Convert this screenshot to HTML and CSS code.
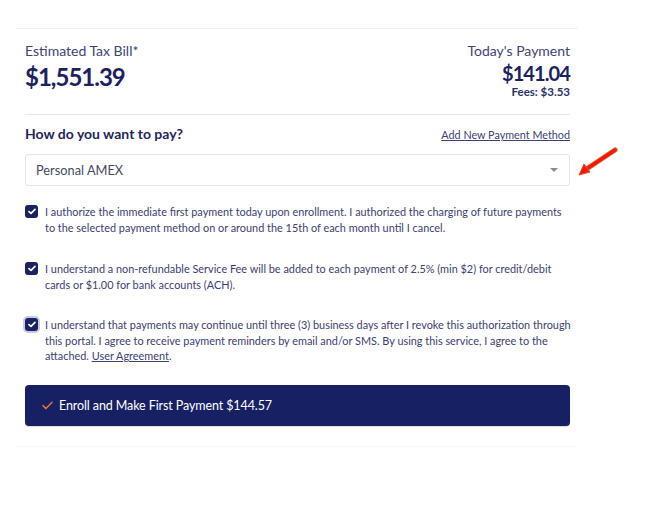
FILE: index.html
```html
<!DOCTYPE html>
<html>
<head>
<meta charset="utf-8">
<link rel="stylesheet" href="styles.css">
</head>
<body>
<div class="panel">
  <div class="summary">
    <div class="col">
      <div class="label">Estimated Tax Bill*</div>
      <div class="amount-big">$1,551.39</div>
    </div>
    <div class="col right">
      <div class="label">Today's Payment</div>
      <div class="amount">$141.04</div>
      <div class="fees">Fees: $3.53</div>
    </div>
  </div>
  <div class="pay-head">
    <div class="question">How do you want to pay?</div>
    <a class="add-link" href="#">Add New Payment Method</a>
  </div>
  <div class="select-wrap">
    <div class="select">
      <span>Personal AMEX</span>
      <span class="caret"></span>
    </div>
    <svg class="arrow" width="44" height="34" viewBox="0 0 44 34">
      <line x1="40" y1="4" x2="10" y2="24" stroke="#e8501c" stroke-width="5" stroke-linecap="round"/>
      <line x1="40" y1="4" x2="10" y2="24" stroke="#f2180c" stroke-width="3" stroke-linecap="round"/>
      <polygon points="4,29 9,18 15,26" fill="#f2180c" stroke="#e8501c" stroke-width="1"/>
    </svg>
  </div>
  <div class="checks">
    <div class="check-row r1">
      <span class="box"><svg width="8" height="7" viewBox="0 0 8 7"><path d="M1 3.6 L3 5.4 L7 1.4" fill="none" stroke="#fff" stroke-width="1.6" stroke-linecap="round" stroke-linejoin="round"/></svg></span>
      <p>I authorize the immediate first payment today upon enrollment. I authorized the charging of future payments to the selected payment method on or around the 15th of each month until I cancel.</p>
    </div>
    <div class="check-row r2">
      <span class="box"><svg width="8" height="7" viewBox="0 0 8 7"><path d="M1 3.6 L3 5.4 L7 1.4" fill="none" stroke="#fff" stroke-width="1.6" stroke-linecap="round" stroke-linejoin="round"/></svg></span>
      <p>I understand a non-refundable Service Fee will be added to each payment of 2.5% (min $2) for credit/debit cards or $1.00 for bank accounts (ACH).</p>
    </div>
    <div class="check-row r3">
      <span class="box focus"><svg width="8" height="7" viewBox="0 0 8 7"><path d="M1 3.6 L3 5.4 L7 1.4" fill="none" stroke="#fff" stroke-width="1.6" stroke-linecap="round" stroke-linejoin="round"/></svg></span>
      <p>I understand that payments may continue until three (3) business days after I revoke this authorization through this portal. I agree to receive payment reminders by email and/or SMS. By using this service, I agree to the attached. <a href="#" class="ua">User Agreement</a>.</p>
    </div>
  </div>
  <button class="enroll">
    <svg width="11" height="9" viewBox="0 0 11 9"><path d="M1 4.6 L4 7.6 L10 1.2" fill="none" stroke="#e0703c" stroke-width="1.5" stroke-linecap="round" stroke-linejoin="round"/></svg>
    <span>Enroll and Make First Payment $144.57</span>
  </button>
  <div class="bottom-line"></div>
</div>
</body>
</html>
```
FILE: styles.css
```css
* { box-sizing: border-box; }
body {
  margin: 0;
  background: #fff;
  font-family: Lato, "Noto Sans", sans-serif;
  color: #3b4170;
}
.panel {
  margin: 28px 0 0 16px;
  width: 562px;
  border-top: 1px solid #f0f0f2;
  padding: 0 8px 0 9px;
}
.summary {
  display: flex;
  justify-content: space-between;
  padding-top: 12px;
  padding-bottom: 15px;
  border-bottom: 1px solid #e6e7ea;
}
.col { display: flex; flex-direction: column; }
.right { align-items: flex-end; }
.label {
  font-size: 14px;
  line-height: 20px;
  color: #3e4472;
}
.amount-big {
  font-size: 24px;
  font-weight: 700;
  letter-spacing: -1px;
  line-height: 30px;
  color: #1b2261;
  margin-top: 1px;
}
.amount {
  font-size: 20px;
  font-weight: 700;
  letter-spacing: -0.9px;
  line-height: 24px;
  color: #1b2261;
  margin-top: 0;
}
.fees {
  font-size: 11.5px;
  font-weight: 700;
  line-height: 14px;
  color: #2b3166;
  margin-top: 0;
}
.pay-head {
  display: flex;
  justify-content: space-between;
  align-items: baseline;
  margin-top: 10px;
}
.question {
  font-size: 14px;
  font-weight: 700;
  color: #1f2560;
  line-height: 18px;
}
.add-link {
  font-size: 10.8px;
  color: #3b4170;
  text-decoration: underline;
}
.select-wrap {
  position: relative;
  margin-top: 11px;
}
.select {
  height: 32px;
  border: 1px solid #e4e5e8;
  border-radius: 3px;
  display: flex;
  align-items: center;
  justify-content: space-between;
  padding: 0 11px 0 10px;
  font-size: 12.8px;
  color: #444a5e;
}
.caret {
  width: 0; height: 0;
  border-left: 4px solid transparent;
  border-right: 4px solid transparent;
  border-top: 4px solid #8a8d96;
}
.arrow {
  position: absolute;
  left: 550px;
  top: -8px;
}
.checks { margin-top: 18px; }
.check-row {
  display: flex;
  align-items: flex-start;
  gap: 7px;
  margin-right: -3px;
}
.check-row p {
  margin: 0;
  font-size: 10.9px;
  line-height: 15.5px;
  color: #3b4170;
}
.r2 { margin-top: 26px; }
.r3 { margin-top: 25px; }
.box {
  flex: none;
  width: 13px;
  height: 13px;
  border-radius: 3px;
  background: #1b2261;
  display: flex;
  align-items: center;
  justify-content: center;
  margin-top: 1px;
}
.box.focus { box-shadow: 0 0 0 2px #c9cbe0; }
.ua { color: #3b4170; text-decoration: underline; }
.enroll {
  margin-top: 21px;
  width: 100%;
  height: 41px;
  border: none;
  border-radius: 4px;
  background: #172063;
  color: #fff;
  font-family: inherit;
  font-size: 12.5px;
  letter-spacing: -0.1px;
  display: flex;
  align-items: center;
  gap: 6px;
  padding: 0 0 0 17px;
  box-shadow: 0 1px 1px rgba(0,0,0,0.15);
}
.bottom-line {
  margin: 20px -8px 0 -9px;
  border-top: 1px solid #f6f6f7;
}
```
